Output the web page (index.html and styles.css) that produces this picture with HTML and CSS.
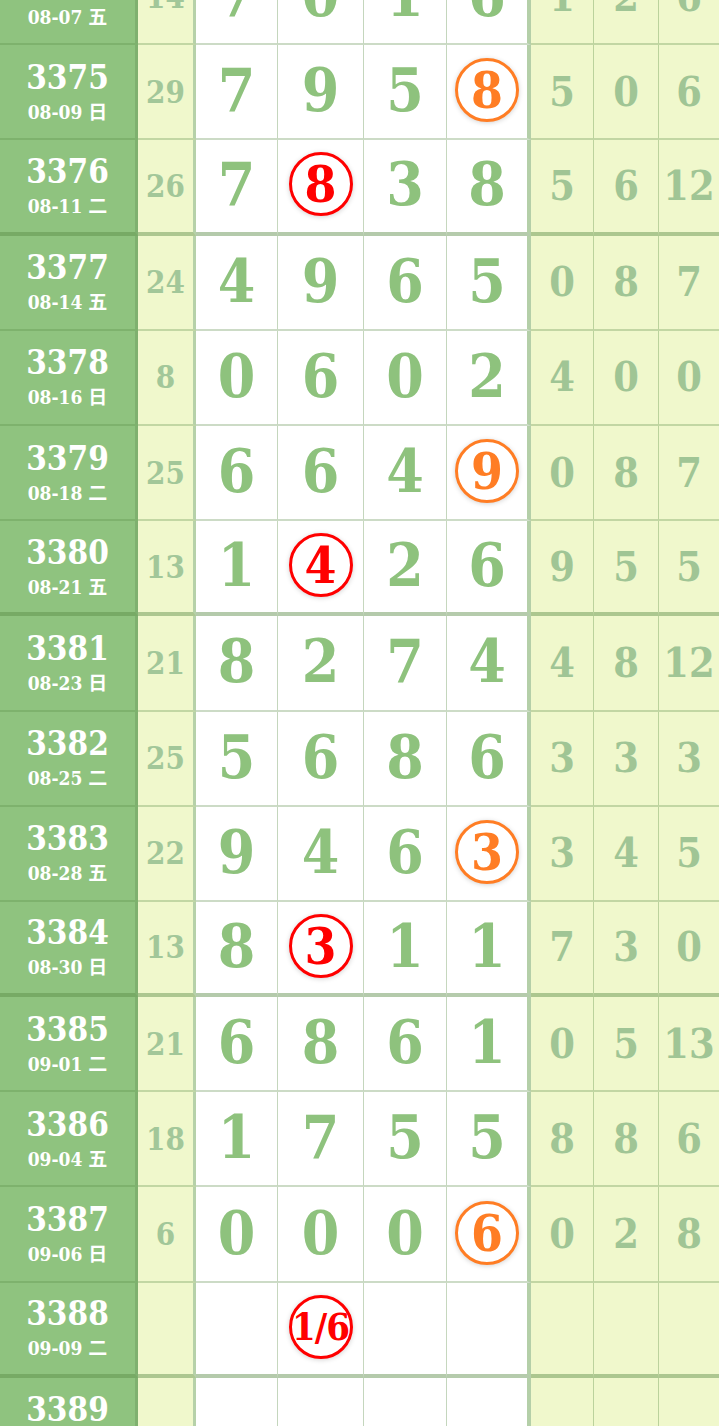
FILE: index.html
```html
<!DOCTYPE html>
<html lang="zh">
<head>
  <meta charset="UTF-8" />
  <meta name="viewport" content="width=device-width, initial-scale=1.0"/>
  <title>开奖走势</title>
  <link rel="stylesheet" href="styles.css">
</head>
<body>

  <main class="chart">
    <div class="row">
      <div class="cell issue"><span class="no">3374</span><span class="date">08-07 五</span></div>
      <div class="cell sum">14</div>
      <div class="cell num">7</div><div class="cell num">0</div><div class="cell num">1</div><div class="cell num last">6</div>
      <div class="cell side">1</div><div class="cell side">2</div><div class="cell side">6</div>
    </div>
    <div class="row">
      <div class="cell issue"><span class="no">3375</span><span class="date">08-09 日</span></div>
      <div class="cell sum">29</div>
      <div class="cell num">7</div><div class="cell num">9</div><div class="cell num">5</div><div class="cell num last"><span class="ball orange">8</span></div>
      <div class="cell side">5</div><div class="cell side">0</div><div class="cell side">6</div>
    </div>
    <div class="row group-end">
      <div class="cell issue"><span class="no">3376</span><span class="date">08-11 二</span></div>
      <div class="cell sum">26</div>
      <div class="cell num">7</div><div class="cell num"><span class="ball red">8</span></div><div class="cell num">3</div><div class="cell num last">8</div>
      <div class="cell side">5</div><div class="cell side">6</div><div class="cell side">12</div>
    </div>
    <div class="row">
      <div class="cell issue"><span class="no">3377</span><span class="date">08-14 五</span></div>
      <div class="cell sum">24</div>
      <div class="cell num">4</div><div class="cell num">9</div><div class="cell num">6</div><div class="cell num last">5</div>
      <div class="cell side">0</div><div class="cell side">8</div><div class="cell side">7</div>
    </div>
    <div class="row">
      <div class="cell issue"><span class="no">3378</span><span class="date">08-16 日</span></div>
      <div class="cell sum">8</div>
      <div class="cell num">0</div><div class="cell num">6</div><div class="cell num">0</div><div class="cell num last">2</div>
      <div class="cell side">4</div><div class="cell side">0</div><div class="cell side">0</div>
    </div>
    <div class="row">
      <div class="cell issue"><span class="no">3379</span><span class="date">08-18 二</span></div>
      <div class="cell sum">25</div>
      <div class="cell num">6</div><div class="cell num">6</div><div class="cell num">4</div><div class="cell num last"><span class="ball orange">9</span></div>
      <div class="cell side">0</div><div class="cell side">8</div><div class="cell side">7</div>
    </div>
    <div class="row group-end">
      <div class="cell issue"><span class="no">3380</span><span class="date">08-21 五</span></div>
      <div class="cell sum">13</div>
      <div class="cell num">1</div><div class="cell num"><span class="ball red">4</span></div><div class="cell num">2</div><div class="cell num last">6</div>
      <div class="cell side">9</div><div class="cell side">5</div><div class="cell side">5</div>
    </div>
    <div class="row">
      <div class="cell issue"><span class="no">3381</span><span class="date">08-23 日</span></div>
      <div class="cell sum">21</div>
      <div class="cell num">8</div><div class="cell num">2</div><div class="cell num">7</div><div class="cell num last">4</div>
      <div class="cell side">4</div><div class="cell side">8</div><div class="cell side">12</div>
    </div>
    <div class="row">
      <div class="cell issue"><span class="no">3382</span><span class="date">08-25 二</span></div>
      <div class="cell sum">25</div>
      <div class="cell num">5</div><div class="cell num">6</div><div class="cell num">8</div><div class="cell num last">6</div>
      <div class="cell side">3</div><div class="cell side">3</div><div class="cell side">3</div>
    </div>
    <div class="row">
      <div class="cell issue"><span class="no">3383</span><span class="date">08-28 五</span></div>
      <div class="cell sum">22</div>
      <div class="cell num">9</div><div class="cell num">4</div><div class="cell num">6</div><div class="cell num last"><span class="ball orange">3</span></div>
      <div class="cell side">3</div><div class="cell side">4</div><div class="cell side">5</div>
    </div>
    <div class="row group-end">
      <div class="cell issue"><span class="no">3384</span><span class="date">08-30 日</span></div>
      <div class="cell sum">13</div>
      <div class="cell num">8</div><div class="cell num"><span class="ball red">3</span></div><div class="cell num">1</div><div class="cell num last">1</div>
      <div class="cell side">7</div><div class="cell side">3</div><div class="cell side">0</div>
    </div>
    <div class="row">
      <div class="cell issue"><span class="no">3385</span><span class="date">09-01 二</span></div>
      <div class="cell sum">21</div>
      <div class="cell num">6</div><div class="cell num">8</div><div class="cell num">6</div><div class="cell num last">1</div>
      <div class="cell side">0</div><div class="cell side">5</div><div class="cell side">13</div>
    </div>
    <div class="row">
      <div class="cell issue"><span class="no">3386</span><span class="date">09-04 五</span></div>
      <div class="cell sum">18</div>
      <div class="cell num">1</div><div class="cell num">7</div><div class="cell num">5</div><div class="cell num last">5</div>
      <div class="cell side">8</div><div class="cell side">8</div><div class="cell side">6</div>
    </div>
    <div class="row">
      <div class="cell issue"><span class="no">3387</span><span class="date">09-06 日</span></div>
      <div class="cell sum">6</div>
      <div class="cell num">0</div><div class="cell num">0</div><div class="cell num">0</div><div class="cell num last"><span class="ball orange">6</span></div>
      <div class="cell side">0</div><div class="cell side">2</div><div class="cell side">8</div>
    </div>
    <div class="row group-end">
      <div class="cell issue"><span class="no">3388</span><span class="date">09-09 二</span></div>
      <div class="cell sum"></div>
      <div class="cell num"></div><div class="cell num"><span class="ball red small">1/6</span></div><div class="cell num"></div><div class="cell num last"></div>
      <div class="cell side"></div><div class="cell side"></div><div class="cell side"></div>
    </div>
    <div class="row">
      <div class="cell issue"><span class="no">3389</span><span class="date">09-11 四</span></div>
      <div class="cell sum"></div>
      <div class="cell num"></div><div class="cell num"></div><div class="cell num"></div><div class="cell num last"></div>
      <div class="cell side"></div><div class="cell side"></div><div class="cell side"></div>
    </div>
  </main>

</body>
</html>
```

FILE: styles.css
```css
body {
  margin: 0;
  padding: 0;
  background: #fff;
  font-family: "DejaVu Serif Condensed", "Liberation Serif", "Noto Sans CJK SC", serif;
  font-weight: bold;
  overflow: hidden;
}

.chart {
  width: 719px;
  margin-top: -50px;
}

.row {
  display: grid;
  grid-template-columns: 138px 58px 82px 86px 83px 84px 63px 65px 60px;
  height: 95.2px;
}

.cell {
  box-sizing: border-box;
  display: flex;
  align-items: center;
  justify-content: center;
  border-bottom: 2px solid rgba(90, 140, 70, 0.3);
  border-right: 1px solid rgba(90, 140, 70, 0.35);
}

.group-end .cell {
  border-bottom: 4px solid rgba(90, 140, 70, 0.45);
}

.issue {
  flex-direction: column;
  background: #8fc37f;
  color: #fff;
  border-right: 3px solid #7fb06f;
  padding-top: 2px;
}

.issue .no {
  font-size: 33px;
  line-height: 38px;
}

.issue .date {
  font-size: 19px;
  line-height: 30px;
}

.sum {
  background: #f0f8cc;
  color: #a2c799;
  font-size: 31px;
  border-right: 3px solid #b6d1a9;
}

.num {
  color: #8ec27d;
  font-size: 60px;
  padding-bottom: 3px;
}

.num.last {
  border-right: 4px solid #b4cfa8;
}

.side {
  background: #f0f8cc;
  color: #a0c595;
  font-size: 41px;
}

.side:last-child {
  border-right: none;
}

.ball {
  box-sizing: border-box;
  width: 64px;
  height: 64px;
  border-radius: 50%;
  border: 3px solid;
  background: #fff;
  display: flex;
  align-items: center;
  justify-content: center;
  font-size: 51px;
  box-shadow: 0 1px 5px rgba(0, 0, 0, 0.18);
}

.ball.orange {
  color: #ff7d24;
  border-color: #ff7d24;
}

.ball.red {
  color: #f00;
  border-color: #f00;
}

.ball.small {
  font-size: 38px;
  letter-spacing: -1px;
}
```
